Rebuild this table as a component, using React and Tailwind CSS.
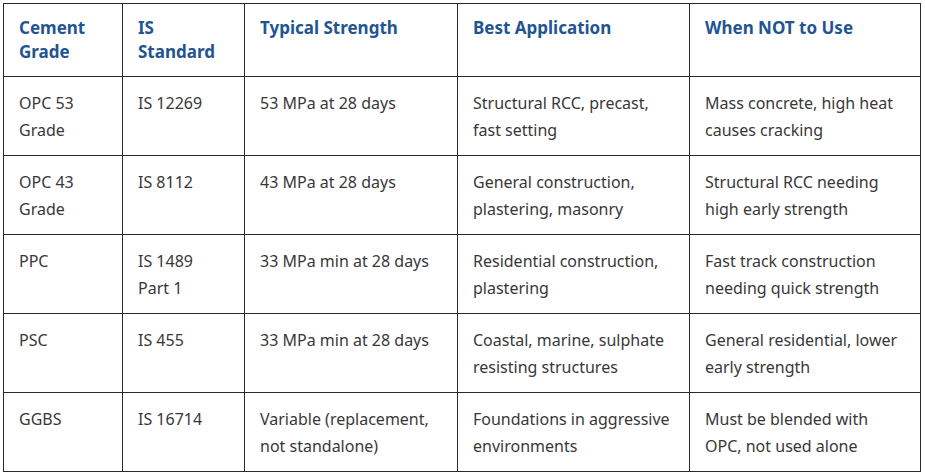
import React from 'react';

const headers = ['Cement Grade', 'IS Standard', 'Typical Strength', 'Best Application', 'When NOT to Use'];

const rows = [
  ['OPC 53 Grade', 'IS 12269', '53 MPa at 28 days', 'Structural RCC, precast, fast setting', 'Mass concrete, high heat causes cracking'],
  ['OPC 43 Grade', 'IS 8112', '43 MPa at 28 days', 'General construction, plastering, masonry', 'Structural RCC needing high early strength'],
  ['PPC', 'IS 1489\nPart 1', '33 MPa min at 28 days', 'Residential construction, plastering', 'Fast track construction needing quick strength'],
  ['PSC', 'IS 455', '33 MPa min at 28 days', 'Coastal, marine, sulphate resisting structures', 'General residential, lower early strength'],
  ['GGBS', 'IS 16714', 'Variable (replacement, not standalone)', 'Foundations in aggressive environments', 'Must be blended with OPC, not used alone'],
];

const widths = ['w-[119px]', 'w-[122px]', 'w-[213px]', 'w-[232px]', 'w-[231px]'];

export default function App() {
  return (
    <div className="bg-white w-[925px] h-[474px] p-[3px] font-['Noto_Sans',sans-serif]">
      <table className="table-fixed border-collapse w-[918px]">
        <colgroup>
          {widths.map((w, i) => (
            <col key={i} className={w} />
          ))}
        </colgroup>
        <thead>
          <tr>
            {headers.map((h) => (
              <th
                key={h}
                className="border border-[#2a2a2a] text-left align-top px-[15px] pt-[12px] pb-[12px] h-[73px] text-[17px] leading-[24px] font-bold text-[#1f5592]"
              >
                {h}
              </th>
            ))}
          </tr>
        </thead>
        <tbody>
          {rows.map((r, i) => (
            <tr key={i}>
              {r.map((c, j) => (
                <td
                  key={j}
                  className="border border-[#2a2a2a] align-top whitespace-pre-line px-[15px] pt-[13px] pb-[11px] h-[79px] text-[16px] leading-[27px] text-[#383838]"
                >
                  {c}
                </td>
              ))}
            </tr>
          ))}
        </tbody>
      </table>
    </div>
  );
}
